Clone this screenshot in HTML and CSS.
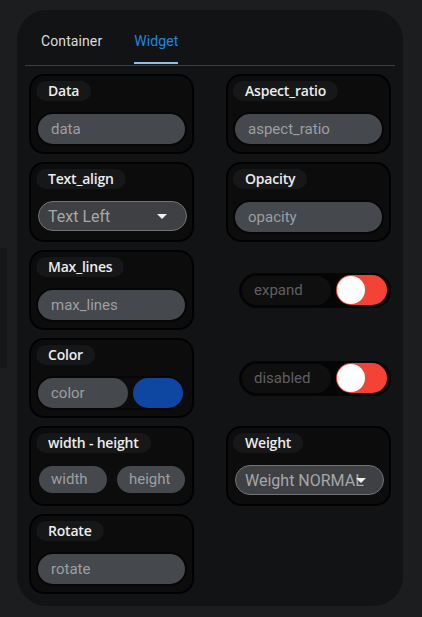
FILE: index.html
```html
<!DOCTYPE html>
<html>
<head>
<meta charset="utf-8">
<link rel="stylesheet" href="styles.css">
</head>
<body>
<div class="edge"></div>
<div class="panel">
  <div class="tabs">
    <div class="tab"><span class="tab-text">Container</span></div>
    <div class="tab active"><span class="tab-text">Widget</span></div>
  </div>
  <div class="grid">
    <div class="card">
      <div class="label">Data</div>
      <div class="field"><div class="input">data</div></div>
    </div>
    <div class="card">
      <div class="label">Aspect_ratio</div>
      <div class="field"><div class="input">aspect_ratio</div></div>
    </div>

    <div class="card">
      <div class="label">Text_align</div>
      <div class="select"><span class="select-text">Text Left</span><span class="arrow"></span></div>
    </div>
    <div class="card">
      <div class="label">Opacity</div>
      <div class="field"><div class="input">opacity</div></div>
    </div>

    <div class="card">
      <div class="label">Max_lines</div>
      <div class="field"><div class="input">max_lines</div></div>
    </div>
    <div class="slot">
      <div class="toggle-row">
        <div class="toggle-label">expand</div>
        <div class="switch"><div class="knob"></div></div>
      </div>
    </div>

    <div class="card">
      <div class="label">Color</div>
      <div class="field pair-color">
        <div class="input color-input">color</div>
        <div class="swatch"></div>
      </div>
    </div>
    <div class="slot">
      <div class="toggle-row">
        <div class="toggle-label">disabled</div>
        <div class="switch"><div class="knob"></div></div>
      </div>
    </div>

    <div class="card">
      <div class="label">width - height</div>
      <div class="pair">
        <div class="small-input">width</div>
        <div class="small-input">height</div>
      </div>
    </div>
    <div class="card">
      <div class="label">Weight</div>
      <div class="select weight"><span class="select-text">Weight NORMAL</span><span class="arrow"></span></div>
    </div>

    <div class="card">
      <div class="label">Rotate</div>
      <div class="field"><div class="input">rotate</div></div>
    </div>
  </div>
</div>
</body>
</html>
```

FILE: styles.css
```css
html, body {
  margin: 0;
  padding: 0;
  background: #1c1d1f;
  width: 422px;
  height: 617px;
  overflow: hidden;
  font-family: Roboto, "Liberation Sans", sans-serif;
}

.edge {
  position: absolute;
  left: 0;
  top: 248px;
  width: 7px;
  height: 120px;
  background: #161719;
}

.panel {
  margin: 10px 0 0 17px;
  width: 386px;
  height: 596px;
  box-sizing: border-box;
  background: #121315;
  border-radius: 30px;
  padding: 0 0 12px 0;
}

.tabs {
  display: flex;
  margin: 0 8px;
  padding-top: 21px;
  border-bottom: 1px solid #3e3f42;
  height: 34px;
}

.tab {
  padding: 0 16px;
  display: flex;
  align-items: flex-start;
}

.tab-text {
  display: block;
  font-size: 14px;
  line-height: 20px;
  height: 33px;
  box-sizing: border-box;
  color: #dcdcdc;
  letter-spacing: 0.1px;
}

.tab.active .tab-text {
  color: #1f87e0;
  border-bottom: 2px solid #8cbcf0;
}

.grid {
  display: grid;
  grid-template-columns: 165px 165px;
  grid-auto-rows: 80px;
  column-gap: 32px;
  row-gap: 8px;
  margin: 8px 12px 0 12px;
}

.card {
  box-sizing: border-box;
  background: #0c0c0d;
  border: 2px solid #020202;
  border-radius: 15px;
  padding: 5px 5px 0 5px;
  display: flex;
  flex-direction: column;
  align-items: flex-start;
}

.label {
  height: 20px;
  line-height: 20px;
  padding: 0 12px;
  border-radius: 10px;
  background: #161718;
  color: #ececec;
  font-family: "Open Sans", "Noto Sans", sans-serif;
  font-weight: 600;
  font-size: 14px;
  letter-spacing: -0.2px;
}

.field {
  margin-top: 13px;
  margin-left: 2px;
  width: 147px;
  display: flex;
  border-radius: 16px;
  box-shadow: 0 0 0 2px #060606;
}

.input {
  flex: 1;
  height: 30px;
  line-height: 30px;
  border-radius: 15px;
  background: #45484d;
  color: #9d9fa2;
  font-size: 15px;
  padding: 0 13px;
}

.pair-color {
  gap: 5px;
  width: 145px;
}

.color-input {
  flex: none;
  width: 90px;
  box-sizing: border-box;
}

.swatch {
  flex: 1;
  height: 30px;
  border-radius: 15px;
  background: #0d47a1;
}

.select {
  margin-top: 12px;
  margin-left: 2px;
  width: 149px;
  height: 30px;
  box-sizing: border-box;
  border: 1.5px solid #707276;
  border-radius: 15px;
  background: #3e4044;
  display: flex;
  align-items: center;
  padding: 0 18px 0 9px;
  position: relative;
  overflow: hidden;
}

.select-text {
  color: #a6a7a9;
  font-size: 16px;
  white-space: nowrap;
}

.arrow {
  position: absolute;
  right: 19px;
  top: 12px;
  width: 0;
  height: 0;
  border-left: 5px solid transparent;
  border-right: 5px solid transparent;
  border-top: 5px solid #f0f0f0;
}

.weight {
  width: 149px;
  padding-right: 10px;
}

.weight .arrow {
  right: 17px;
}

.pair {
  margin-top: 13px;
  margin-left: 3px;
  display: flex;
  gap: 10px;
}

.small-input {
  width: 68px;
  height: 27px;
  line-height: 27px;
  box-sizing: border-box;
  border-radius: 14px;
  background: #45484d;
  color: #9d9fa2;
  font-size: 15px;
  padding-left: 12px;
}

.slot {
  display: flex;
  align-items: center;
  justify-content: flex-end;
}

.toggle-row {
  display: flex;
  align-items: center;
  gap: 5px;
  width: 152px;
  height: 35px;
  box-sizing: border-box;
  padding: 0 4px 0 3px;
  border-radius: 18px;
  background: #050505;
}

.toggle-label {
  width: 89px;
  height: 29px;
  line-height: 29px;
  box-sizing: border-box;
  padding-left: 12px;
  border-radius: 15px;
  background: #0f0f10;
  color: #5f5f61;
  font-size: 15px;
}

.switch {
  width: 51px;
  height: 30px;
  border-radius: 15px;
  background: #f44336;
  display: flex;
  align-items: center;
  padding-left: 1px;
  box-sizing: border-box;
}

.knob {
  width: 28px;
  height: 28px;
  border-radius: 50%;
  background: #ffffff;
}
```
